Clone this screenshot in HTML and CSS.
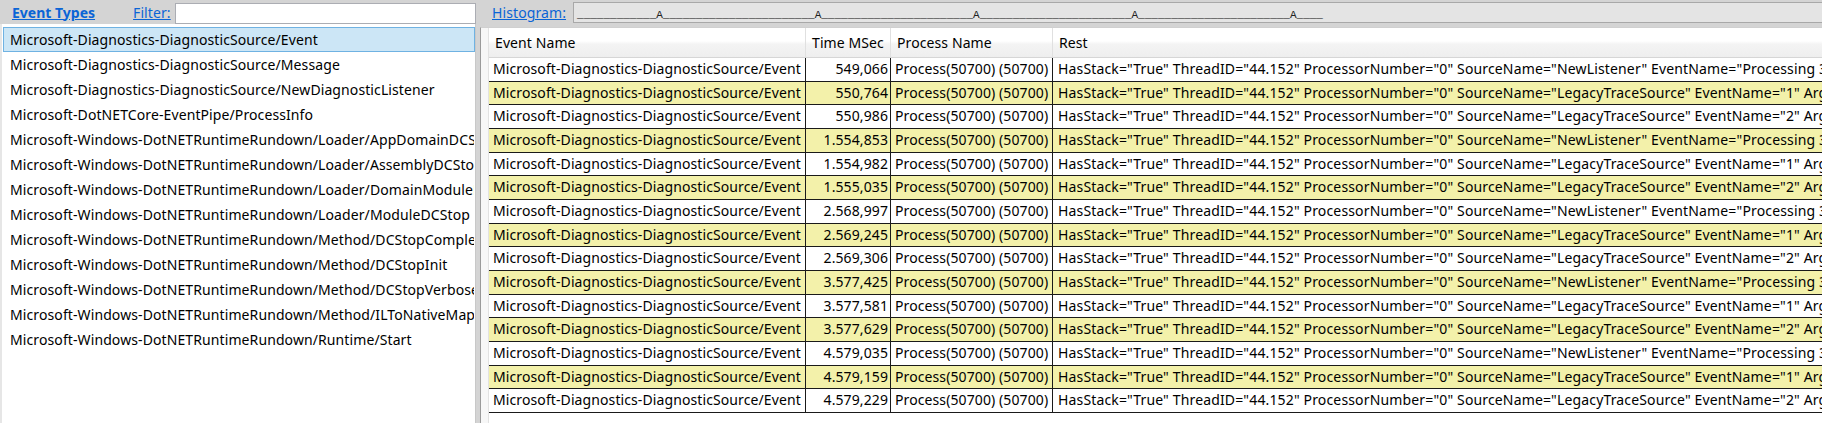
FILE: index.html
```html
<!DOCTYPE html>
<html>
<head>
<meta charset="utf-8">
<link rel="stylesheet" href="styles.css">
</head>
<body>
<div class="app">
  <div class="left">
    <div class="left-bar">
      <a class="link bold" href="#">Event Types</a>
      <a class="link filter-label" href="#">Filter:</a>
      <input class="filter" type="text">
    </div>
    <div class="list">
      <div class="item selected">Microsoft-Diagnostics-DiagnosticSource/Event</div>
      <div class="item">Microsoft-Diagnostics-DiagnosticSource/Message</div>
      <div class="item">Microsoft-Diagnostics-DiagnosticSource/NewDiagnosticListener</div>
      <div class="item">Microsoft-DotNETCore-EventPipe/ProcessInfo</div>
      <div class="item">Microsoft-Windows-DotNETRuntimeRundown/Loader/AppDomainDCStop</div>
      <div class="item">Microsoft-Windows-DotNETRuntimeRundown/Loader/AssemblyDCStop</div>
      <div class="item">Microsoft-Windows-DotNETRuntimeRundown/Loader/DomainModuleDCStop</div>
      <div class="item">Microsoft-Windows-DotNETRuntimeRundown/Loader/ModuleDCStop</div>
      <div class="item">Microsoft-Windows-DotNETRuntimeRundown/Method/DCStopComplete</div>
      <div class="item">Microsoft-Windows-DotNETRuntimeRundown/Method/DCStopInit</div>
      <div class="item">Microsoft-Windows-DotNETRuntimeRundown/Method/DCStopVerbose</div>
      <div class="item">Microsoft-Windows-DotNETRuntimeRundown/Method/ILToNativeMap</div>
      <div class="item">Microsoft-Windows-DotNETRuntimeRundown/Runtime/Start</div>
    </div>
  </div>
  <div class="splitter"></div>
  <div class="right">
    <div class="right-bar">
      <a class="link" href="#">Histogram:</a>
      <div class="histogram"><span class="hist-text">____________A_______________________A_______________________A_______________________A_______________________A____</span></div>
    </div>
    <div class="grid">
      <div class="rowheads"></div>
      <div class="table">
        <div class="thead">
          <div class="th c-name">Event Name</div>
          <div class="th c-time">Time MSec</div>
          <div class="th c-proc">Process Name</div>
          <div class="th c-rest">Rest</div>
        </div>
        <div class="row"><div class="td c-name">Microsoft-Diagnostics-DiagnosticSource/Event</div><div class="td c-time">549,066</div><div class="td c-proc">Process(50700) (50700)</div><div class="td c-rest">HasStack="True" ThreadID="44.152" ProcessorNumber="0" SourceName="NewListener" EventName="Processing 35" Arguments=""</div></div>
        <div class="row alt"><div class="td c-name">Microsoft-Diagnostics-DiagnosticSource/Event</div><div class="td c-time">550,764</div><div class="td c-proc">Process(50700) (50700)</div><div class="td c-rest">HasStack="True" ThreadID="44.152" ProcessorNumber="0" SourceName="LegacyTraceSource" EventName="1" Arguments=""</div></div>
        <div class="row"><div class="td c-name">Microsoft-Diagnostics-DiagnosticSource/Event</div><div class="td c-time">550,986</div><div class="td c-proc">Process(50700) (50700)</div><div class="td c-rest">HasStack="True" ThreadID="44.152" ProcessorNumber="0" SourceName="LegacyTraceSource" EventName="2" Arguments=""</div></div>
        <div class="row alt"><div class="td c-name">Microsoft-Diagnostics-DiagnosticSource/Event</div><div class="td c-time">1.554,853</div><div class="td c-proc">Process(50700) (50700)</div><div class="td c-rest">HasStack="True" ThreadID="44.152" ProcessorNumber="0" SourceName="NewListener" EventName="Processing 36" Arguments=""</div></div>
        <div class="row"><div class="td c-name">Microsoft-Diagnostics-DiagnosticSource/Event</div><div class="td c-time">1.554,982</div><div class="td c-proc">Process(50700) (50700)</div><div class="td c-rest">HasStack="True" ThreadID="44.152" ProcessorNumber="0" SourceName="LegacyTraceSource" EventName="1" Arguments=""</div></div>
        <div class="row alt"><div class="td c-name">Microsoft-Diagnostics-DiagnosticSource/Event</div><div class="td c-time">1.555,035</div><div class="td c-proc">Process(50700) (50700)</div><div class="td c-rest">HasStack="True" ThreadID="44.152" ProcessorNumber="0" SourceName="LegacyTraceSource" EventName="2" Arguments=""</div></div>
        <div class="row"><div class="td c-name">Microsoft-Diagnostics-DiagnosticSource/Event</div><div class="td c-time">2.568,997</div><div class="td c-proc">Process(50700) (50700)</div><div class="td c-rest">HasStack="True" ThreadID="44.152" ProcessorNumber="0" SourceName="NewListener" EventName="Processing 37" Arguments=""</div></div>
        <div class="row alt"><div class="td c-name">Microsoft-Diagnostics-DiagnosticSource/Event</div><div class="td c-time">2.569,245</div><div class="td c-proc">Process(50700) (50700)</div><div class="td c-rest">HasStack="True" ThreadID="44.152" ProcessorNumber="0" SourceName="LegacyTraceSource" EventName="1" Arguments=""</div></div>
        <div class="row"><div class="td c-name">Microsoft-Diagnostics-DiagnosticSource/Event</div><div class="td c-time">2.569,306</div><div class="td c-proc">Process(50700) (50700)</div><div class="td c-rest">HasStack="True" ThreadID="44.152" ProcessorNumber="0" SourceName="LegacyTraceSource" EventName="2" Arguments=""</div></div>
        <div class="row alt"><div class="td c-name">Microsoft-Diagnostics-DiagnosticSource/Event</div><div class="td c-time">3.577,425</div><div class="td c-proc">Process(50700) (50700)</div><div class="td c-rest">HasStack="True" ThreadID="44.152" ProcessorNumber="0" SourceName="NewListener" EventName="Processing 38" Arguments=""</div></div>
        <div class="row"><div class="td c-name">Microsoft-Diagnostics-DiagnosticSource/Event</div><div class="td c-time">3.577,581</div><div class="td c-proc">Process(50700) (50700)</div><div class="td c-rest">HasStack="True" ThreadID="44.152" ProcessorNumber="0" SourceName="LegacyTraceSource" EventName="1" Arguments=""</div></div>
        <div class="row alt"><div class="td c-name">Microsoft-Diagnostics-DiagnosticSource/Event</div><div class="td c-time">3.577,629</div><div class="td c-proc">Process(50700) (50700)</div><div class="td c-rest">HasStack="True" ThreadID="44.152" ProcessorNumber="0" SourceName="LegacyTraceSource" EventName="2" Arguments=""</div></div>
        <div class="row"><div class="td c-name">Microsoft-Diagnostics-DiagnosticSource/Event</div><div class="td c-time">4.579,035</div><div class="td c-proc">Process(50700) (50700)</div><div class="td c-rest">HasStack="True" ThreadID="44.152" ProcessorNumber="0" SourceName="NewListener" EventName="Processing 39" Arguments=""</div></div>
        <div class="row alt"><div class="td c-name">Microsoft-Diagnostics-DiagnosticSource/Event</div><div class="td c-time">4.579,159</div><div class="td c-proc">Process(50700) (50700)</div><div class="td c-rest">HasStack="True" ThreadID="44.152" ProcessorNumber="0" SourceName="LegacyTraceSource" EventName="1" Arguments=""</div></div>
        <div class="row"><div class="td c-name">Microsoft-Diagnostics-DiagnosticSource/Event</div><div class="td c-time">4.579,229</div><div class="td c-proc">Process(50700) (50700)</div><div class="td c-rest">HasStack="True" ThreadID="44.152" ProcessorNumber="0" SourceName="LegacyTraceSource" EventName="2" Arguments=""</div></div>
      </div>
    </div>
  </div>
</div>
</body>
</html>
```

FILE: styles.css
```css
* { box-sizing: border-box; }

html, body {
  margin: 0;
  padding: 0;
}

body {
  width: 1822px;
  height: 423px;
  overflow: hidden;
  background: #d4d4d4;
  font-family: "Noto Sans", "Open Sans", sans-serif;
  font-size: 14px;
  letter-spacing: 0.1px;
  color: #000;
}

.app {
  display: flex;
  height: 423px;
}

.link {
  color: #0a64d6;
  text-decoration: underline;
  white-space: nowrap;
}

.bold { font-weight: bold; letter-spacing: 0; }

/* ---------- left pane ---------- */
.left {
  width: 476px;
  display: flex;
  flex-direction: column;
}

.left-bar {
  height: 24px;
  display: flex;
  align-items: center;
  padding-left: 12px;
}

.filter-label {
  margin-left: 38px;
}

.filter {
  margin-left: 4px;
  width: 304px;
  height: 21px;
  margin-top: 2px;
  border: 1px solid #abadb3;
  background: #fff;
  padding: 0;
}

.list {
  flex: 1;
  background: #fff;
  border-left: 2px solid #e6e6e6;
  border-right: 1px solid #c8c8c8;
  padding-top: 3px;
  overflow: hidden;
}

.item {
  height: 25px;
  line-height: 23px;
  padding-left: 6px;
  white-space: nowrap;
  overflow: hidden;
  border: 1px solid transparent;
  margin-left: 1px;
}

.item.selected {
  background: #cce6f6;
  border-color: #6fb2e2;
}

.splitter {
  width: 4px;
}

/* ---------- right pane ---------- */
.right {
  flex: 1;
  min-width: 0;
  display: flex;
  flex-direction: column;
}

.right-bar {
  height: 27px;
  display: flex;
  align-items: flex-start;
  padding-left: 12px;
}

.right-bar .link {
  margin-top: 3px;
}

.histogram {
  margin-left: 7px;
  margin-top: 2px;
  flex: 1;
  height: 21px;
  background: #e4e4e4;
  border: 1px solid #a8a8a8;
  border-right: none;
  padding-left: 3px;
  overflow: hidden;
  white-space: nowrap;
}

.hist-text {
  font-family: "Liberation Mono", "Courier New", monospace;
  font-size: 11px;
  letter-spacing: 0;
  line-height: 16px;
  color: #222;
}

.grid {
  flex: 1;
  display: flex;
  background: #fff;
  border-left: 1px solid #9a9a9a;
  border-top: 1px solid #d0d0d0;
  overflow: hidden;
}

.rowheads {
  width: 8px;
  flex: none;
  background: #f7f7f7;
  border-right: 1px solid #e2e2e2;
}

.table {
  flex: 1;
  min-width: 0;
  overflow: hidden;
}

.thead {
  display: flex;
  height: 30px;
  background: linear-gradient(to bottom, #ffffff 0%, #ffffff 45%, #f4f4f4 55%, #eeeeee 100%);
  border-bottom: 1px solid #d6d6d6;
}

.th {
  padding-left: 6px;
  line-height: 29px;
  border-right: 1px solid #e0e0e0;
  white-space: nowrap;
  flex: none;
}

.row {
  display: flex;
  height: 23.67px;
  border-bottom: 1px solid #1a1a1a;
  background: #fff;
}

.row.alt {
  background: #f3f1aa;
}

.td {
  line-height: 22px;
  padding-left: 4px;
  border-right: 1px solid #1a1a1a;
  white-space: nowrap;
  overflow: hidden;
  flex: none;
}

.c-name { width: 317px; }
.c-time { width: 85px; }
.td.c-time { text-align: right; padding-right: 2px; padding-left: 0; }
.c-proc { width: 162px; }
.c-rest { flex: 1; border-right: none; }
.th.c-rest { flex: 1; border-right: none; }
.td.c-rest { padding-left: 5px; letter-spacing: 0.15px; }
```
